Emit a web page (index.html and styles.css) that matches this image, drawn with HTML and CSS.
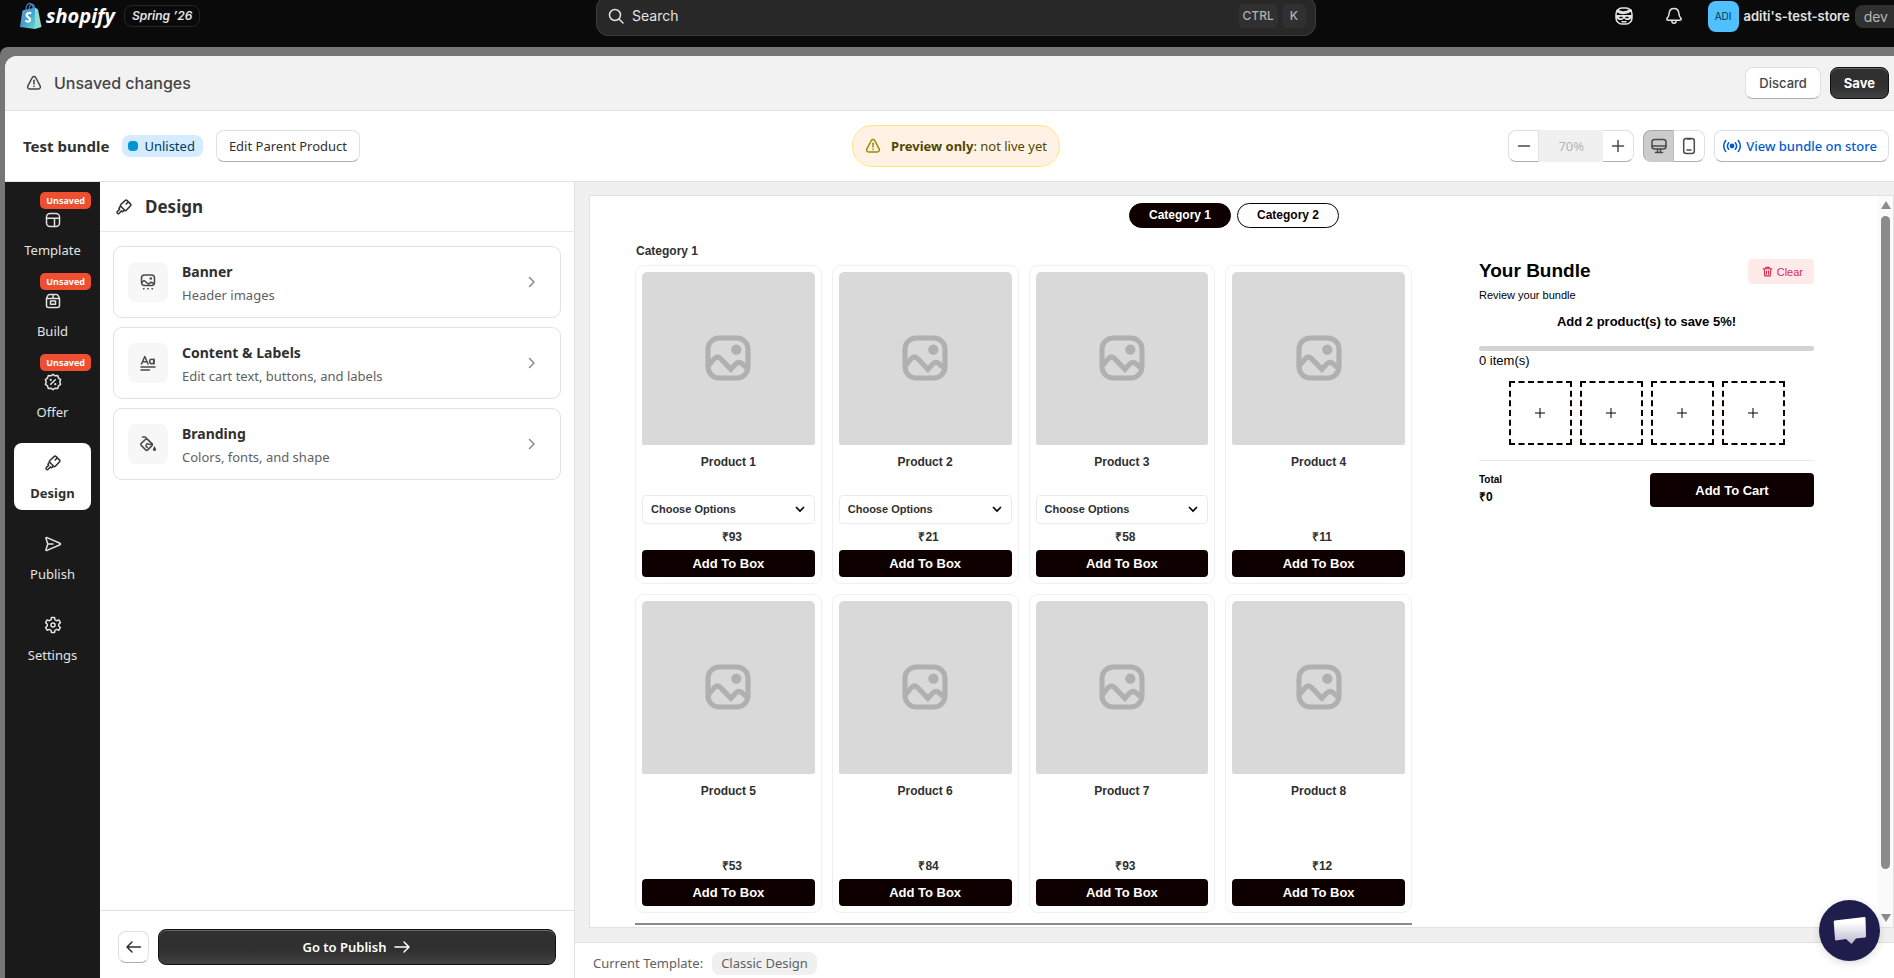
FILE: index.html
```html
<!DOCTYPE html>
<html lang="en">
<head>
	<meta charset="UTF-8">
	<title>Test bundle</title>
	<link rel="stylesheet" href="styles.css">
</head>
<body>
	<!-- shared icons -->
	<svg class="symbols" aria-hidden="true">
		<symbol id="warning" viewBox="0 0 20 20"><path d="M10 3.500c.7 0 1.300.3 1.700 1l4.400 8.300c.8 1.600-.1 3.200-1.800 3.200H5.700c-1.700 0-2.600-1.600-1.800-3.200L8.300 4.500c.4-.7 1-1 1.700-1z"/><path d="M10 7.300v3.700"/><path d="M10 13.300v.2"/></symbol>
		<symbol id="brush" viewBox="0 0 20 20"><path d="M11.300 3.400q.8-.8 1.600 0l3.700 3.700q.8.800 0 1.600l-4.300 4.600q-.8.800-1.600 0L6.700 9.300q-.8-.8 0-1.600z"/><path d="M6.600 9.200l-1.400 1.500q-.5.700.1 1.200l.4.400-2.200 2.100q-1 1-.2 1.900.9.900 1.900-.1l2.200-2.300.5.500q.6.500 1.200 0l1.400-1.300"/><path d="M13.700 5.500l-1.500 1.600"/></symbol>
		<symbol id="image" viewBox="0 0 20 20"><rect x="3.750" y="3.750" width="12.500" height="12.500" rx="3.500"/><path d="M3.900 12.400l1.800-2.200q1-1 2 0l3.200 3.300 1.600-1.700q.9-.9 1.900 0l1.700 1.500"/><circle class="dot" cx="12.600" cy="7.400" r="1.600"/></symbol>
		<symbol id="chevron" viewBox="0 0 20 20"><path d="M7.500 5.500l4.500 4.500-4.500 4.500"/></symbol>
	</svg>

	<div class="topbar">
		<div class="brand">
			<svg class="bag" viewBox="0 0 22 28">
				<defs><linearGradient id="bagfill" x1="0" y1="0" x2="1" y2="1"><stop offset="0" stop-color="#6d9fd0"/><stop offset=".5" stop-color="#3e9ed2"/><stop offset="1" stop-color="#63e0c8"/></linearGradient></defs>
				<path d="M6 8c0-3.500 1.500-6.500 3.800-6.500S13 4 13 7M9 7.500c.4-3 1.800-5 3.300-5S14.500 4.500 14.500 7" fill="none" stroke="#4f78b8" stroke-width="1.300"/>
				<path d="M2.500 8.500L15 5.500v21.500L0 25z" fill="url(#bagfill)"/>
				<path d="M15 5.500l3 2 3.500 17.500L15 27z" fill="#8fd9cf"/>
				<path d="M11.300 11.400c-1.800-1-4.600-.4-4.600 1.800 0 2.400 3.600 2.300 3.400 4.600-.2 2.200-3 2.200-4.700.7" fill="none" stroke="#fff" stroke-width="2.300"/>
			</svg>
			<span class="wordmark">shopify</span>
			<span class="edition">Spring ’26</span>
		</div>
		<button class="search" type="button">
			<svg class="icon" viewBox="0 0 20 20"><circle cx="9" cy="9" r="5.500"/><path d="M13 13l4 4"/></svg>
			<span class="search-text">Search</span>
			<kbd>CTRL</kbd><kbd>K</kbd>
		</button>
		<div class="account">
			<button class="top-icon" type="button" aria-label="Sidekick"><svg class="icon" viewBox="0 0 20 20"><rect x="2" y="2" width="16" height="16" rx="6"/><path d="M3.500 5c4 2.400 9 1.800 13-.5" stroke-width="3"/><path d="M2 9h16v3l-3 2h-3l-2-1.500L8 14H5l-3-2z" fill="#e3e3e3" stroke="none"/><path d="M6 11.500h2M12 11.500h2" stroke="#0a0a0a"/><path d="M8 15.700h4"/></svg></button>
			<button class="top-icon" type="button" aria-label="Notifications"><svg class="icon" viewBox="0 0 20 20"><path d="M10 2.500c-3 0-4.600 2-4.800 4.500-.2 3-.6 3.700-1.800 4.900-1 1-.6 2.300.8 2.300h11.600c1.400 0 1.800-1.300.8-2.300-1.200-1.200-1.600-1.900-1.800-4.900C14.600 4.500 13 2.500 10 2.500z"/><path d="M7.800 14.500c0 3.700 4.400 3.700 4.400 0"/></svg></button>
			<span class="avatar">ADI</span>
			<span class="store">aditi's-test-store</span>
			<span class="dev">dev</span>
		</div>
	</div>

	<div class="backdrop">
		<div class="modal">
			<div class="savebar">
				<svg class="icon"><use href="#warning"/></svg>
				<span class="savebar-text">Unsaved changes</span>
				<button class="btn inter" type="button">Discard</button>
				<button class="btn inter dark" type="button">Save</button>
			</div>

			<div class="header">
				<div class="header-left">
					<h1>Test bundle</h1>
					<span class="status">Unlisted</span>
					<button class="btn" type="button">Edit Parent Product</button>
				</div>
				<div class="notice"><svg class="icon"><use href="#warning"/></svg><span><b>Preview only</b>: not live yet</span></div>
				<div class="header-right">
					<div class="group">
						<button class="btn square" type="button" aria-label="Zoom out"><svg class="icon" viewBox="0 0 20 20"><path d="M4.500 10h11"/></svg></button>
						<input class="zoom" type="text" value="70%" aria-label="Zoom" disabled>
						<button class="btn square" type="button" aria-label="Zoom in"><svg class="icon" viewBox="0 0 20 20"><path d="M4.500 10h11M10 4.500v11"/></svg></button>
					</div>
					<div class="group">
						<button class="btn square pressed" type="button" aria-label="Desktop"><svg class="icon" viewBox="0 0 20 20"><rect x="3" y="3.500" width="14" height="9.500" rx="2.500"/><path d="M3 10h14M8.500 13v3M11.500 13v3M6.500 16.500h7"/></svg></button>
						<button class="btn square" type="button" aria-label="Mobile"><svg class="icon" viewBox="0 0 20 20"><rect x="4.700" y="2.500" width="10.600" height="15" rx="2.500"/><path d="M8 14h4M8.500 3h3"/></svg></button>
					</div>
					<a class="btn view" href="#"><svg class="icon" viewBox="0 0 20 20"><circle class="dot" cx="10" cy="10" r="2.400"/><path d="M6.700 6.700q-2.600 3.300 0 6.600M13.300 6.700q2.600 3.300 0 6.600M3.700 4.500q-4 5.500 0 11M16.300 4.500q4 5.500 0 11"/></svg>View bundle on store</a>
				</div>
			</div>

			<div class="main">
				<nav class="sidebar">
					<a href="#"><em>Unsaved</em><svg class="icon" viewBox="0 0 20 20"><rect x="3.500" y="3.500" width="13" height="13" rx="3.500"/><path d="M3.500 8.200h13M11.500 8.200v8.300"/></svg>Template</a>
					<a href="#"><em>Unsaved</em><svg class="icon" viewBox="0 0 20 20"><path d="M3.500 7.500l1.200-2.700q.6-1.300 2-1.300h6.600q1.400 0 2 1.300l1.200 2.700v7q0 2-2 2h-9q-2 0-2-2zM3.500 7.500h13M10 3.500v4"/><rect x="7.500" y="10" width="5" height="3.300"/></svg>Build</a>
					<a href="#"><em>Unsaved</em><svg class="icon" viewBox="0 0 20 20"><path d="M10 2.300l2.100 1.500 2.600-.2.800 2.500 2.100 1.500-.8 2.400.8 2.400-2.100 1.500-.8 2.500-2.600-.2L10 17.700l-2.100-1.500-2.600.2-.8-2.500-2.100-1.500.8-2.400-.8-2.400 2.100-1.500.8-2.500 2.600.2z"/><path d="M7.700 12.300l4.600-4.600"/><circle class="dot" cx="7.700" cy="7.900" r="1.100"/><circle class="dot" cx="12.300" cy="12.200" r="1.100"/></svg>Offer</a>
					<a class="active" href="#"><svg class="icon"><use href="#brush"/></svg>Design</a>
					<a href="#"><svg class="icon" viewBox="0 0 20 20"><path d="M3 4.500q-.3-1.200 1-.9l13 5.700q1 .7 0 1.400L4 16.400q-1.300.3-1-.9L4.800 10zM4.800 10H10"/></svg>Publish</a>
					<a href="#"><svg class="icon" viewBox="0 0 20 20"><path d="M8.500 2.500h3l.5 2.300 1.600.9 2.300-.8 1.500 2.700-1.700 1.600v1.800l1.700 1.500-1.500 2.700-2.300-.8-1.600.9-.5 2.200h-3L8 15.300l-1.600-.9-2.300.8-1.500-2.700L4.300 11V9.200L2.600 7.600l1.500-2.700 2.300.8L8 4.800z"/><circle cx="10" cy="10" r="2"/></svg>Settings</a>
				</nav>

				<section class="panel">
					<h2><svg class="icon"><use href="#brush"/></svg>Design</h2>
					<div class="options">
						<button class="option" type="button">
							<span class="option-icon"><svg class="icon" viewBox="0 0 20 20"><rect x="3.500" y="3" width="13" height="10.500" rx="3"/><path d="M3.700 10.500l2.300-2 2.200 1.700 2.300 2 2.500-2 3 1.300"/><circle class="dot" cx="12.800" cy="6.500" r="1.300"/><path d="M5.500 16.700h.5M9.800 16.700h.5M14 16.700h.5"/></svg></span>
							<span class="option-text"><b>Banner</b><small>Header images</small></span>
							<svg class="icon arrow"><use href="#chevron"/></svg>
						</button>
						<button class="option" type="button">
							<span class="option-icon"><svg class="icon" viewBox="0 0 20 20"><path d="M3.500 11L6.800 3.500 10 11M4.600 8.700h4.300M16 6v5M3 14h14M3 17h8.500"/><circle cx="13.800" cy="8.500" r="2.200"/></svg></span>
							<span class="option-text"><b>Content &amp; Labels</b><small>Edit cart text, buttons, and labels</small></span>
							<svg class="icon arrow"><use href="#chevron"/></svg>
						</button>
						<button class="option" type="button">
							<span class="option-icon"><svg class="icon" viewBox="0 0 20 20"><path d="M8.500 4.500l5.500 5.500q.8.800 0 1.600l-4.300 4.300q-1 1-2 0l-4.500-4.500q-1-1 0-2zM4.500 3h2.700L14.500 10l-3 .5q-2-1.500-3.300.2-.8 2 1.300 2.800"/><path class="dot" d="M16.500 12l1.600 3q.5 2-1.600 2t-1.600-2z"/></svg></span>
							<span class="option-text"><b>Branding</b><small>Colors, fonts, and shape</small></span>
							<svg class="icon arrow"><use href="#chevron"/></svg>
						</button>
					</div>
					<div class="panel-footer">
						<button class="btn back" type="button" aria-label="Back"><svg class="icon" viewBox="0 0 20 20"><path d="M16.500 10H3.500M8 5l-5 5 5 5"/></svg></button>
						<button class="btn dark go" type="button">Go to Publish <svg class="icon" viewBox="0 0 20 20"><path d="M3 10h13.500M12 5l5 5-5 5"/></svg></button>
					</div>
				</section>

				<section class="preview">
					<div class="frame">
						<div class="page">
							<div class="tabs">
								<button class="tab selected" type="button">Category 1</button>
								<button class="tab" type="button">Category 2</button>
							</div>
							<div class="columns">
								<div class="products">
									<h3>Category 1</h3>
									<div class="grid">
										<div class="card">
											<div class="picture"><svg><use href="#image"/></svg></div>
											<p class="name">Product 1</p>
											<div class="choice"><select aria-label="Product 1 options"><option>Choose Options</option></select></div>
											<p class="price">₹93</p>
											<button class="add" type="button">Add To Box</button>
										</div>
										<div class="card">
											<div class="picture"><svg><use href="#image"/></svg></div>
											<p class="name">Product 2</p>
											<div class="choice"><select aria-label="Product 2 options"><option>Choose Options</option></select></div>
											<p class="price">₹21</p>
											<button class="add" type="button">Add To Box</button>
										</div>
										<div class="card">
											<div class="picture"><svg><use href="#image"/></svg></div>
											<p class="name">Product 3</p>
											<div class="choice"><select aria-label="Product 3 options"><option>Choose Options</option></select></div>
											<p class="price">₹58</p>
											<button class="add" type="button">Add To Box</button>
										</div>
										<div class="card">
											<div class="picture"><svg><use href="#image"/></svg></div>
											<p class="name">Product 4</p>
											<div class="choice"></div>
											<p class="price">₹11</p>
											<button class="add" type="button">Add To Box</button>
										</div>
										<div class="card">
											<div class="picture"><svg><use href="#image"/></svg></div>
											<p class="name">Product 5</p>
											<div class="choice"></div>
											<p class="price">₹53</p>
											<button class="add" type="button">Add To Box</button>
										</div>
										<div class="card">
											<div class="picture"><svg><use href="#image"/></svg></div>
											<p class="name">Product 6</p>
											<div class="choice"></div>
											<p class="price">₹84</p>
											<button class="add" type="button">Add To Box</button>
										</div>
										<div class="card">
											<div class="picture"><svg><use href="#image"/></svg></div>
											<p class="name">Product 7</p>
											<div class="choice"></div>
											<p class="price">₹93</p>
											<button class="add" type="button">Add To Box</button>
										</div>
										<div class="card">
											<div class="picture"><svg><use href="#image"/></svg></div>
											<p class="name">Product 8</p>
											<div class="choice"></div>
											<p class="price">₹12</p>
											<button class="add" type="button">Add To Box</button>
										</div>
									</div>
									<hr>
								</div>

								<aside class="bundle">
									<div class="bundle-head">
										<h2>Your Bundle</h2>
										<button class="clear" type="button"><svg class="icon" viewBox="0 0 20 20"><path d="M2 5h16M7 5V2.500h6V5M4 5l1 13h10l1-13M8 8.500V15M12 8.500V15"/></svg>Clear</button>
									</div>
									<p class="review">Review your bundle</p>
									<p class="offer">Add 2 product(s) to save 5%!</p>
									<div class="progress"></div>
									<p class="count">0 item(s)</p>
									<div class="slots">
										<button type="button" aria-label="Slot 1"><svg class="icon" viewBox="0 0 10 10"><path d="M0 5h10M5 0v10"/></svg></button>
										<button type="button" aria-label="Slot 2"><svg class="icon" viewBox="0 0 10 10"><path d="M0 5h10M5 0v10"/></svg></button>
										<button type="button" aria-label="Slot 3"><svg class="icon" viewBox="0 0 10 10"><path d="M0 5h10M5 0v10"/></svg></button>
										<button type="button" aria-label="Slot 4"><svg class="icon" viewBox="0 0 10 10"><path d="M0 5h10M5 0v10"/></svg></button>
									</div>
									<div class="checkout">
										<div class="total"><span>Total</span><b>₹0</b></div>
										<button class="add cart" type="button">Add To Cart</button>
									</div>
								</aside>
							</div>
						</div>
						<div class="scrollbar">
							<svg viewBox="0 0 10 8"><path d="M5 0l5 8H0z"/></svg>
							<div class="thumb"></div>
							<svg viewBox="0 0 10 8"><path d="M5 8l5-8H0z"/></svg>
						</div>
					</div>
					<div class="template">Current Template: <span>Classic Design</span></div>
				</section>
			</div>
		</div>
	</div>

	<button class="chat" type="button" aria-label="Open chat">
		<svg viewBox="0 0 34 30">
			<defs><linearGradient id="bubble" x1="0" y1="0" x2="0" y2="1"><stop offset=".2" stop-color="#fff"/><stop offset="1" stop-color="#b9b8cc"/></linearGradient></defs>
			<path d="M1.500 4.500L31.500 1q1 0 1 1L33 20q0 1-1 1.500l-9 1-4.500 5.500-5.500-5L3 24.500q-1 0-1-1L.7 5.500z" fill="url(#bubble)"/>
		</svg>
	</button>
</body>
</html>
```
FILE: styles.css
```css
*{
	box-sizing: border-box;
	margin: 0;
	padding: 0;
}
body{
	display: flex;
	flex-direction: column;
	height: 100vh;
	overflow: hidden;
	background: #0a0a0a;
	color: #303030;
	font-family: "Noto Sans", "Open Sans", sans-serif;
	font-size: 13px;
	line-height: 20px;
}
button, input, select{
	font: inherit;
	color: inherit;
}
a{
	color: inherit;
	text-decoration: none;
}
.symbols{
	position: absolute;
	width: 0;
	height: 0;
}
.icon{
	flex: none;
	width: 20px;
	height: 20px;
	fill: none;
	stroke: currentColor;
	stroke-width: 1.5;
	stroke-linejoin: round;
	stroke-linecap: round;
}
.dot{
	fill: currentColor;
	stroke: none;
}

/* top bar, tucked a little under the window edge */
.topbar{
	flex: none;
	display: grid;
	grid-template-columns: 1fr 720px 1fr;
	align-items: center;
	height: 48px;
	margin: -8px 0 7px;
	padding-left: 18px;
	color: #e3e3e3;
	font-family: Inter, sans-serif;
}
.brand{
	display: flex;
	align-items: center;
	padding-left: 2px;
}
.bag{
	width: 22px;
	height: 28px;
}
.wordmark{
	margin: 0 9px 0 4px;
	color: #fff;
	font: italic bold 20px/28px "Open Sans", sans-serif;
}
.edition{
	padding: 0 7px;
	border: 1px solid #262626;
	border-radius: 8px;
	font-size: 12px;
	font-style: italic;
	font-weight: 600;
}
.search{
	display: flex;
	align-items: center;
	gap: 4px;
	height: 40px;
	padding: 0 9px;
	border: 1px solid #3a3a3a;
	border-radius: 12px;
	background: #282828;
}
.search-text{
	flex: 1;
	margin-left: 2px;
	text-align: left;
	font-size: 14px;
}
kbd{
	padding: 0 4px;
	border-radius: 5px;
	background: #303030;
	color: #b0b0b0;
	font: 500 12px/24px Inter, sans-serif;
}
kbd:last-child{
	padding: 0 8px;
}
.account{
	display: flex;
	align-items: center;
	justify-content: flex-end;
	white-space: nowrap;
}
.top-icon{
	width: 20px;
	height: 20px;
	margin-right: 30px;
	border: 0;
	background: none;
}
.top-icon + .avatar{
	margin-left: -6px;
}
.avatar{
	width: 31px;
	margin-right: 5px;
	border-radius: 8px;
	background: #51c0ff;
	color: #00344f;
	text-align: center;
	font-size: 10px;
	line-height: 31px;
}
.store{
	margin-right: 5px;
	font-size: 13px;
	font-weight: 600;
}
.dev{
	padding: 0 6px 0 9px;
	border-radius: 8px 0 0 8px;
	background: #303030;
	color: #b5b5b5;
	font-size: 14px;
	line-height: 23px;
}

.backdrop{
	flex: 1;
	display: flex;
	min-height: 0;
	padding: 9px 0 0 5px;
	border-top-left-radius: 8px;
	background: #767676;
}
.modal{
	flex: 1;
	display: flex;
	flex-direction: column;
	min-width: 0;
	overflow: hidden;
	border-top-left-radius: 12px;
	background: #fff;
}

/* buttons */
.btn{
	display: flex;
	align-items: center;
	justify-content: center;
	height: 32px;
	padding: 0 12px;
	border: 1px solid #e0e0e0;
	border-bottom-color: #b0b0b0;
	border-radius: 8px;
	background: #fff;
	white-space: nowrap;
}
.inter{
	padding: 0 13px;
	font-family: Inter, sans-serif;
	font-weight: 500;
}
.dark{
	border-color: #111;
	background: linear-gradient(#303030 60%, #424242);
	box-shadow: inset 0 1px 0 #666;
	color: #fff;
	font-weight: 600;
}

.savebar{
	flex: none;
	display: flex;
	align-items: center;
	gap: 9px;
	height: 55px;
	padding: 0 5px 0 19px;
	border-bottom: 1px solid #e1e1e1;
	background: #f2f2f2;
	color: #454545;
}
.savebar-text{
	flex: 1;
	margin-left: 1px;
	font-family: Inter, sans-serif;
	font-size: 16px;
	font-weight: 500;
}
.savebar .dark{
	color: #fff;
	font-weight: 700;
}

.header{
	flex: none;
	display: grid;
	grid-template-columns: 1fr auto 1fr;
	align-items: center;
	height: 71px;
	padding: 0 5px 0 18px;
	border-bottom: 1px solid #e1e1e1;
}
.header-left, .header-right{
	display: flex;
	align-items: center;
}
.header-left{
	gap: 13px;
}
.header-right{
	justify-content: flex-end;
	gap: 9px;
}
h1{
	font-size: 15px;
	font-weight: 700;
}
.status{
	display: flex;
	align-items: center;
	gap: 6px;
	padding: 1px 8px 1px 6px;
	border-radius: 8px;
	background: #d5ebff;
	color: #003a5a;
}
.status::before{
	content: "";
	width: 10px;
	height: 10px;
	border-radius: 4px;
	background: #0094d5;
}
.notice{
	display: flex;
	align-items: center;
	gap: 8px;
	height: 42px;
	padding: 0 12px 0 10px;
	border: 1px solid #ffe879;
	border-radius: 20px;
	background: #fff1e3;
	color: #4f4700;
}
.notice .icon{
	color: #998a00;
}
.group{
	display: flex;
}
.group > :first-child{
	border-radius: 8px 0 0 8px;
}
.group > :last-child{
	border-left: 0;
	border-radius: 0 8px 8px 0;
}
.square{
	width: 31px;
	padding: 0;
	color: #4a4a4a;
}
.pressed{
	border-color: #a8a8a8 #c0c0c0 #ccc #a8a8a8;
	background: #ccc;
}
.zoom{
	width: 64px;
	height: 32px;
	border: 0;
	background: #f0f0f0;
	color: #b5b5b5;
	text-align: center;
}
.view{
	gap: 4px;
	padding: 0 11px 0 7px;
	color: #005bd3;
	font-weight: 500;
}

.main{
	flex: 1;
	display: flex;
	min-height: 0;
}
.sidebar{
	flex: none;
	display: flex;
	flex-direction: column;
	gap: 14px;
	width: 95px;
	padding: 18px 9px;
	background: #1a1a1a;
	color: #e3e3e3;
}
.sidebar a{
	position: relative;
	display: flex;
	flex-direction: column;
	align-items: center;
	gap: 10px;
	height: 67px;
	padding-top: 10px;
	border-radius: 8px;
}
.sidebar .active{
	background: #fff;
	color: #303030;
	font-weight: 700;
}
.sidebar em{
	position: absolute;
	top: -8px;
	right: 0;
	padding: 0 6px;
	border-radius: 5px;
	background: #f04e30;
	color: #fff;
	font-size: 9px;
	font-style: normal;
	font-weight: 700;
	line-height: 17px;
}

.panel{
	flex: none;
	display: flex;
	flex-direction: column;
	width: 475px;
	border-right: 1px solid #e1e1e1;
}
.panel h2{
	display: flex;
	align-items: center;
	gap: 11px;
	height: 50px;
	padding-left: 14px;
	border-bottom: 1px solid #e8e8e8;
	font-size: 17px;
}
.options{
	flex: 1;
	display: flex;
	flex-direction: column;
	gap: 9px;
	padding: 14px 13px;
}
.option{
	display: flex;
	align-items: center;
	height: 72px;
	padding: 0 18px 0 14px;
	border: 1px solid #e1e1e1;
	border-radius: 9px;
	background: #fff;
	text-align: left;
}
.option-icon{
	display: flex;
	align-items: center;
	justify-content: center;
	width: 40px;
	height: 40px;
	margin-right: 14px;
	border-radius: 8px;
	background: #f7f7f7;
	color: #4a4a4a;
}
.option-text{
	flex: 1;
	display: flex;
	flex-direction: column;
	gap: 3px;
	padding-top: 2px;
}
.option-text b{
	font-size: 14px;
}
.option-text small{
	color: #616161;
	font-size: 13px;
}
.arrow{
	color: #8a8a8a;
}
.panel-footer{
	display: flex;
	align-items: center;
	gap: 9px;
	padding: 18px 18px 13px;
	border-top: 1px solid #e1e1e1;
}
.back{
	width: 31px;
	padding: 0;
}
.go{
	flex: 1;
	gap: 5px;
	height: 36px;
}

.preview{
	flex: 1;
	display: flex;
	flex-direction: column;
	min-width: 0;
	background: #f0f0f0;
}
.frame{
	flex: 1;
	display: flex;
	min-height: 0;
	margin: 13px 0 14px 14px;
	border: 1px solid #e1e1e1;
	background: #fff;
	color: #303030;
	font-family: "Liberation Sans", Arial, sans-serif;
}
.page{
	flex: 1;
	min-width: 0;
	overflow: hidden;
}
.tabs{
	display: flex;
	justify-content: center;
	gap: 6px;
	padding: 7px 0 13px;
}
.tab{
	height: 25px;
	padding: 0 19px;
	border: 1px solid #0f0000;
	border-radius: 13px;
	background: #fff;
	color: #0f0000;
	font-size: 12px;
	font-weight: 700;
	line-height: 23px;
}
.selected{
	background: #0f0000;
	color: #fff;
}
.columns{
	display: flex;
	gap: 67px;
	padding: 0 64px 0 45px;
}
.products{
	flex: 1;
}
.products h3{
	margin-bottom: 4px;
	padding-left: 1px;
	font-size: 12px;
}
.grid{
	display: grid;
	grid-template-columns: repeat(4, 1fr);
	gap: 10px;
}
.card{
	padding: 6px;
	border: 1px solid #f0f0f0;
	border-radius: 9px;
	text-align: center;
	font-size: 12px;
	font-weight: 700;
}
.picture{
	display: flex;
	align-items: center;
	justify-content: center;
	aspect-ratio: 1;
	border-radius: 5px 5px 2px 2px;
	background: #d9d9d9;
}
.picture svg{
	width: 64px;
	height: 64px;
	fill: none;
	stroke: #b0b0b0;
	stroke-width: 1.6;
	color: #b0b0b0;
}
.name{
	margin: 7px 0 23px;
}
.choice{
	height: 29px;
}
.choice select{
	width: 100%;
	height: 29px;
	padding: 0 8px;
	border: 1px solid #ebebeb;
	border-radius: 4px;
	appearance: none;
	background: url("data:image/svg+xml,%3Csvg xmlns='http://www.w3.org/2000/svg' viewBox='0 0 10 7'%3E%3Cpath d='M1 1l4 4 4-4' fill='none' stroke='%23000' stroke-width='1.6'/%3E%3C/svg%3E") no-repeat right 9px center / 10px 7px;
	font-size: 11px;
	font-weight: 700;
}
.price{
	margin: 3px 0;
	padding-left: 7px;
}
.add{
	display: block;
	width: 100%;
	height: 27px;
	border: 0;
	border-radius: 4px;
	background: #0f0000;
	color: #fff;
	font-size: 13px;
	font-weight: 700;
	line-height: 25px;
}
hr{
	margin-top: 10px;
	border: 0;
	border-top: 2px solid #8c8686;
}

.bundle{
	width: 335px;
	padding-top: 18px;
	color: #000;
}
.bundle-head{
	display: flex;
	justify-content: space-between;
	height: 26px;
}
.bundle h2{
	font-size: 19px;
	line-height: 24px;
}
.clear{
	display: flex;
	align-items: center;
	gap: 4px;
	height: 25px;
	padding: 0 11px 0 14px;
	border: 0;
	border-radius: 4px;
	background: #ffeaea;
	color: #d72c4d;
	font-size: 11px;
}
.clear .icon{
	width: 11px;
	height: 11px;
	stroke-width: 2;
}
.review{
	font-size: 11px;
}
.offer{
	margin: 7px 0 14px;
	text-align: center;
	font-weight: 700;
}
.progress{
	height: 5px;
	border-radius: 3px;
	background: #d3d3d3;
}
.slots{
	display: flex;
	justify-content: center;
	gap: 8px;
	margin-top: 10px;
	padding-bottom: 15px;
	border-bottom: 1px solid #e8e8e8;
}
.slots button{
	display: flex;
	align-items: center;
	justify-content: center;
	width: 63px;
	height: 64px;
	border: 2px dashed #0f0000;
	background: #fff;
}
.slots .icon{
	width: 10px;
	height: 10px;
	stroke-width: 1;
	stroke-linecap: butt;
}
.checkout{
	display: flex;
	justify-content: space-between;
	padding-top: 12px;
}
.total{
	display: flex;
	flex-direction: column;
	font-size: 12px;
}
.total span{
	font-size: 10px;
	font-weight: 700;
	line-height: 14px;
}
.cart{
	width: 164px;
	height: 34px;
}

.scrollbar{
	flex: none;
	display: flex;
	flex-direction: column;
	align-items: center;
	gap: 7px;
	width: 15px;
	padding: 5px 0;
	background: #fafafa;
}
.scrollbar svg{
	width: 10px;
	height: 8px;
	fill: #8b8b8b;
}
.thumb{
	flex: 1;
	width: 9px;
	margin-bottom: 38px;
	border-radius: 5px;
	background: #8b8b8b;
}
.template{
	display: flex;
	gap: 9px;
	height: 36px;
	padding: 9px 18px 0;
	border-top: 1px solid #e1e1e1;
	background: #fff;
	color: #616161;
	line-height: 23px;
}
.template span{
	height: 23px;
	padding: 0 9px;
	border-radius: 8px;
	background: #f0f0f0;
}

.chat{
	position: fixed;
	right: 14px;
	bottom: 17px;
	display: flex;
	align-items: center;
	justify-content: center;
	width: 61px;
	height: 61px;
	border: 0;
	border-radius: 50%;
	background: #1f1d4b;
	box-shadow: 0 2px 8px rgba(0, 0, 0, .15);
}
.chat svg{
	width: 34px;
	height: 30px;
}
```
